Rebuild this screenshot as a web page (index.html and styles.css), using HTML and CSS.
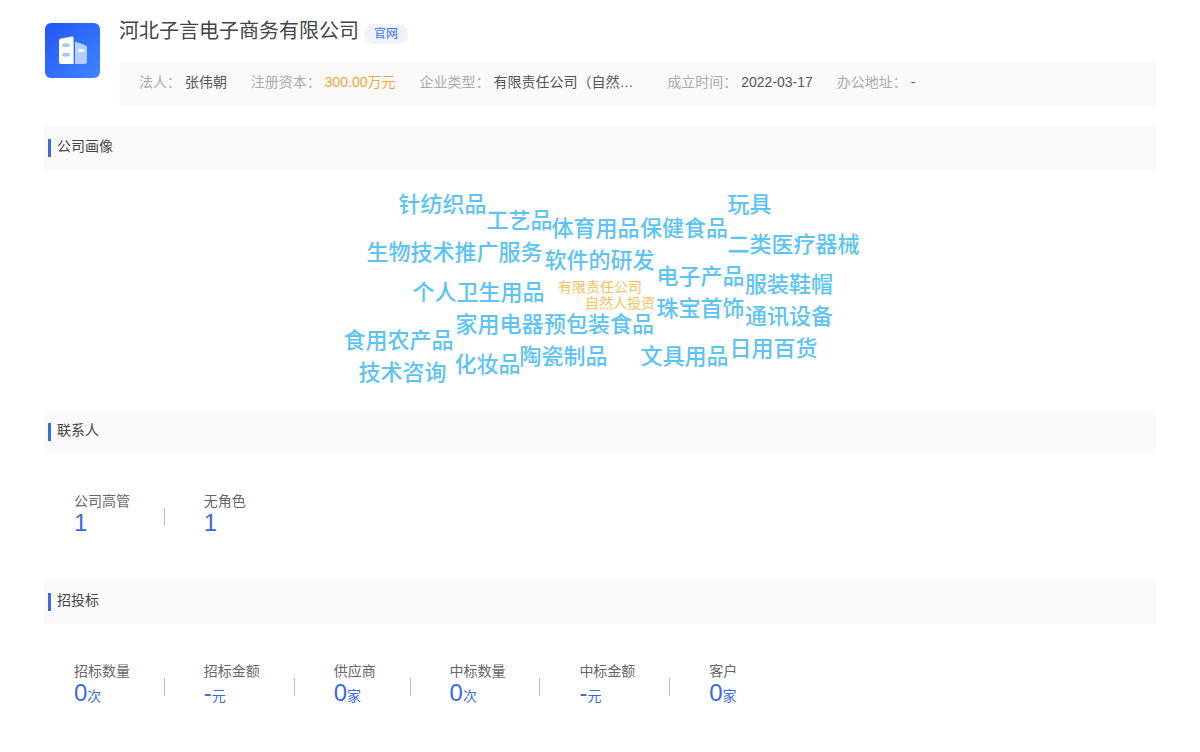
FILE: index.html
```html
<!DOCTYPE html>
<html lang="zh-CN">
<head>
  <meta charset="UTF-8" />
  <meta name="viewport" content="width=device-width, initial-scale=1" />
  <title>河北子言电子商务有限公司</title>
  <link rel="stylesheet" href="styles.css">
</head>
<body>
  <header class="company">
    <div class="logo">
      <svg width="31" height="31" viewBox="0 0 31 31">
        <path d="M2 5.5 Q2 3.6 4 3.4 L15 1.6 Q16.6 1.5 16.6 3 L16.6 29 L4 29 Q2 29 2 27 Z" fill="#fff" />
        <path d="M18 6.5 L28 10 Q30 10.8 30 12.5 L30 27 Q30 29 28 29 L18 29 Z" fill="#b3cdfd" />
        <rect x="5" y="8.5" width="8" height="3.6" rx="1.8" fill="#a9c4fb" />
        <rect x="5" y="18" width="8" height="3.6" rx="1.8" fill="#a9c4fb" />
        <rect x="21" y="14" width="6" height="3" rx="1.2" fill="#fff" />
      </svg>
    </div>
    <div class="company-main">
      <div class="company-title">
        <h1>河北子言电子商务有限公司</h1>
        <span class="badge">官网</span>
      </div>
      <div class="info-bar">
        <div class="info-item"><span class="info-label">法人：</span><span class="info-value">张伟朝</span></div>
        <div class="info-item"><span class="info-label">注册资本：</span><span class="info-value money">300.00万元</span></div>
        <div class="info-item"><span class="info-label">企业类型：</span><span class="info-value clip">有限责任公司（自然人投资或控股）</span></div>
        <div class="info-item"><span class="info-label">成立时间：</span><span class="info-value">2022-03-17</span></div>
        <div class="info-item"><span class="info-label">办公地址：</span><span class="info-value">-</span></div>
      </div>
    </div>
  </header>

  <section>
    <h2 class="section-head"><span>公司画像</span></h2>
    <div class="cloud">
      <span class="word" style="left:354.5px;top:24px">针纺织品</span>
      <span class="word" style="left:442.5px;top:40px">工艺品</span>
      <span class="word" style="left:507.5px;top:48px">体育用品</span>
      <span class="word" style="left:596px;top:48px">保健食品</span>
      <span class="word" style="left:683.5px;top:24px">玩具</span>
      <span class="word" style="left:683.5px;top:64px">二类医疗器械</span>
      <span class="word" style="left:322.5px;top:72px">生物技术推广服务</span>
      <span class="word" style="left:500.5px;top:80px">软件的研发</span>
      <span class="word" style="left:612.5px;top:96px">电子产品</span>
      <span class="word" style="left:701px;top:104px">服装鞋帽</span>
      <span class="word" style="left:368.5px;top:112px">个人卫生用品</span>
      <span class="word tag" style="left:514px;top:110px">有限责任公司</span>
      <span class="word tag" style="left:541px;top:126px">自然人投资</span>
      <span class="word" style="left:612.5px;top:128px">珠宝首饰</span>
      <span class="word" style="left:701px;top:136px">通讯设备</span>
      <span class="word" style="left:411.5px;top:144px">家用电器</span>
      <span class="word" style="left:500px;top:144px">预包装食品</span>
      <span class="word" style="left:299.5px;top:160px">食用农产品</span>
      <span class="word" style="left:685.5px;top:168px">日用百货</span>
      <span class="word" style="left:475.5px;top:176px">陶瓷制品</span>
      <span class="word" style="left:596.5px;top:176px">文具用品</span>
      <span class="word" style="left:410.5px;top:184px">化妆品</span>
      <span class="word" style="left:314.5px;top:192px">技术咨询</span>
    </div>
  </section>

  <section>
    <h2 class="section-head"><span>联系人</span></h2>
    <div class="stats">
      <div class="stat"><div class="stat-label">公司高管</div><div class="stat-value">1</div></div>
      <i class="stat-line"></i>
      <div class="stat"><div class="stat-label">无角色</div><div class="stat-value">1</div></div>
    </div>
  </section>

  <section>
    <h2 class="section-head"><span>招投标</span></h2>
    <div class="stats">
      <div class="stat"><div class="stat-label">招标数量</div><div class="stat-value">0<small>次</small></div></div>
      <i class="stat-line"></i>
      <div class="stat"><div class="stat-label">招标金额</div><div class="stat-value">-<small>元</small></div></div>
      <i class="stat-line"></i>
      <div class="stat"><div class="stat-label">供应商</div><div class="stat-value">0<small>家</small></div></div>
      <i class="stat-line"></i>
      <div class="stat"><div class="stat-label">中标数量</div><div class="stat-value">0<small>次</small></div></div>
      <i class="stat-line"></i>
      <div class="stat"><div class="stat-label">中标金额</div><div class="stat-value">-<small>元</small></div></div>
      <i class="stat-line"></i>
      <div class="stat"><div class="stat-label">客户</div><div class="stat-value">0<small>家</small></div></div>
    </div>
  </section>
</body>
</html>
```

FILE: styles.css
```css
body {
  margin: 0;
  padding: 16px 44px 0;
  background: #fff;
  color: #333;
  font-family: "Liberation Sans", "Noto Sans CJK SC", sans-serif;
  font-size: 14px;
}
.company {
  display: flex;
  height: 110px;
}
.logo {
  display: flex;
  align-items: center;
  justify-content: center;
  flex: none;
  width: 55px;
  height: 55px;
  margin: 7px 19px 0 1px;
  border-radius: 6px;
  background: linear-gradient(135deg, #2356f6, #3f85ff);
}
.company-main {
  flex: 1;
  min-width: 0;
}
.company-title {
  display: flex;
  align-items: center;
  height: 30px;
}
.company-title h1 {
  margin: 0;
  color: #444;
  font-size: 20px;
  font-weight: 400;
  line-height: 30px;
}
.badge {
  margin: 5px 0 0 5px;
  padding: 0 10px;
  border-radius: 10px;
  background: #eef3fb;
  color: #3a6de0;
  font-size: 12px;
  line-height: 20px;
}
.info-bar {
  display: flex;
  align-items: center;
  gap: 23.8px;
  box-sizing: border-box;
  height: 44px;
  margin-top: 16px;
  padding: 0 0 4px 20px;
  background: #fafafa;
}
.info-item {
  display: flex;
  align-items: baseline;
  line-height: 20px;
  white-space: nowrap;
}
.info-label {
  margin-right: 4px;
  color: #aaa;
}
.info-value {
  color: #555;
}
.money {
  color: #f0a93a;
}
.clip {
  overflow: hidden;
  max-width: 150px;
  text-overflow: ellipsis;
}
.section-head {
  display: flex;
  align-items: center;
  height: 44px;
  margin: 0;
  padding-left: 4px;
  background: #fafafa;
  color: #444;
  font-size: 14px;
  font-weight: 400;
}
.section-head span {
  padding: 0 0 4px 6px;
  border-left: 3px solid #3a6ae0;
  line-height: 14px;
}
.cloud {
  position: relative;
  height: 240px;
}
.word {
  position: absolute;
  color: #5cc3f2;
  font-size: 22px;
  font-weight: 500;
  line-height: 22px;
  white-space: nowrap;
}
.word.tag {
  color: #f5c25c;
  font-size: 14px;
  font-weight: 400;
  line-height: 14px;
}
.stats {
  display: flex;
  align-items: center;
  box-sizing: border-box;
  height: 126px;
  padding: 0 0 8px 30px;
}
.stat-label {
  color: #666;
  line-height: 20px;
}
.stat-value {
  color: #3a6ae0;
  font-size: 24px;
  line-height: 24px;
}
.stat-value small {
  font-size: 14px;
  line-height: 14px;
}
.stat-line {
  width: 1px;
  height: 18px;
  margin: 8px 39px 0 33.85px;
  background: #bbb;
}
```
